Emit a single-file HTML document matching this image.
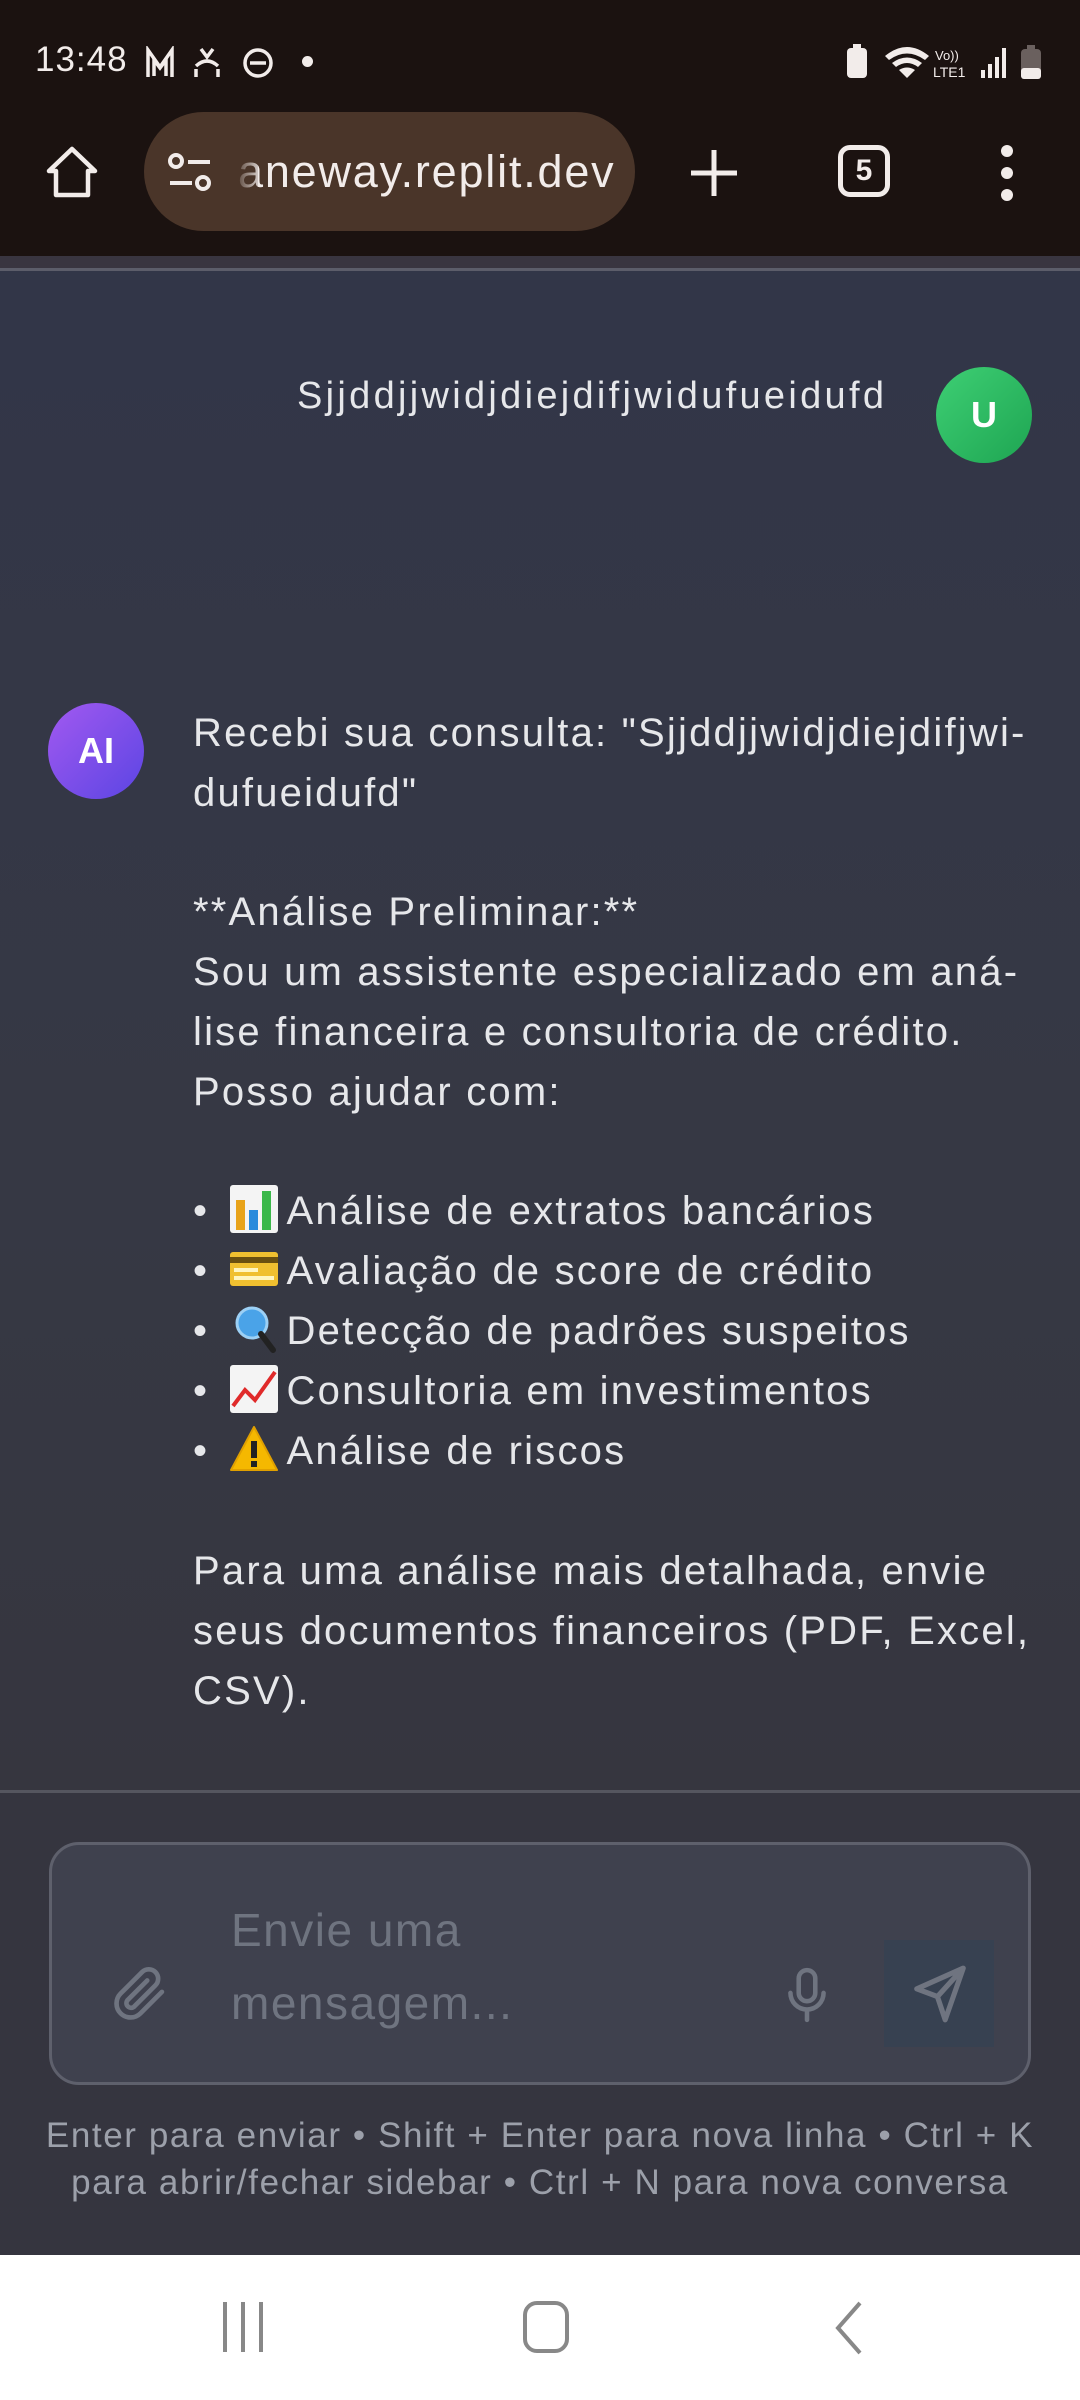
<!DOCTYPE html>
<html><head><meta charset="utf-8"><style>
*{margin:0;padding:0;box-sizing:border-box}
body{width:1080px;height:2400px;overflow:hidden;position:relative;background:#333646;font-family:"Liberation Sans","DejaVu Sans",sans-serif}
.a{position:absolute;white-space:nowrap}
#top{position:absolute;left:0;top:0;width:1080px;height:256px;background:#1b1210}
#strip{position:absolute;left:0;top:256px;width:1080px;height:12px;background:#393540}
#line1{position:absolute;left:0;top:268px;width:1080px;height:3px;background:#5c5d6a}
#chat{position:absolute;left:0;top:271px;width:1080px;height:1519px;background:linear-gradient(#323648,#363844 60%,#36363f)}
.t{color:#e6e7ea;font-size:40px;letter-spacing:2.2px;line-height:60px;left:193px}
.bot{position:absolute;left:0;top:1790px;width:1080px;height:465px;background:#35353f;border-top:3px solid #55565f}
.em{display:inline-block;width:50px;height:50px;vertical-align:-10px;margin:0 8px 0 6px}
</style></head><body>
<div id="top"></div><div id="strip"></div><div id="line1"></div><div id="chat"></div>

<!-- status bar -->
<div class="a" style="left:35px;top:40px;color:#f2ecea;font-size:35px;letter-spacing:1px">13:48</div>
<svg class="a" style="left:146px;top:46px" width="140" height="34" viewBox="0 0 140 34" fill="none" stroke="#f2ecea" stroke-width="3.5">
<path d="M2 31V4l12 17L26 4v27"/><path d="M8 30V14l6 8 6-8v16"/>
<path d="M55 3l6 8 6-8M50 20q11-10 22 0M50 31v-8M72 31v-8"/>
<circle cx="112" cy="17" r="13"/><path d="M104 17h16"/>
</svg>
<div class="a" style="left:302px;top:56px;width:11px;height:11px;border-radius:50%;background:#f2ecea"></div>
<svg class="a" style="left:845px;top:44px" width="210" height="36" viewBox="0 0 210 36" fill="#f2ecea">
<rect x="2" y="4" width="20" height="30" rx="4"/><rect x="8" y="0" width="8" height="5"/>
<path d="M40 12q22-18 44 0l-4 4q-18-13-36 0z M47 19q15-11 30 0l-4 4q-11-8-22 0z M54 26q8-5 16 0l-8 8z"/>
<text x="90" y="16" font-size="13" font-family="Liberation Sans">Vo))</text>
<text x="88" y="33" font-size="14" font-family="Liberation Sans">LTE1</text>
<rect x="136" y="26" width="4" height="8"/><rect x="143" y="20" width="4" height="14"/><rect x="150" y="13" width="4" height="21"/><rect x="157" y="4" width="4" height="30"/>
<rect x="176" y="5" width="20" height="30" rx="4" fill="#6a605e"/><rect x="176" y="24" width="20" height="11" rx="3"/><rect x="182" y="1" width="8" height="5" fill="#6a605e"/>
</svg>

<!-- toolbar -->
<svg class="a" style="left:44px;top:144px" width="56" height="56" viewBox="0 0 56 56" fill="none" stroke="#f2ecea" stroke-width="4.5" stroke-linejoin="round"><path d="M5 27L28 5l23 22h-7v24H12V27z"/></svg>
<div class="a" style="left:144px;top:112px;width:491px;height:119px;border-radius:60px;background:#4a3529"></div>
<svg class="a" style="left:166px;top:152px" width="50" height="42" viewBox="0 0 50 42" fill="none" stroke="#f2ecea" stroke-width="4"><circle cx="10" cy="9" r="6"/><path d="M22 10h22M4 31h22"/><circle cx="37" cy="31" r="6"/></svg>
<div class="a" style="left:238px;top:144px;color:#f2ecea;font-size:45px;letter-spacing:1.8px;line-height:56px">aneway.replit.dev</div>
<div class="a" style="left:234px;top:140px;width:24px;height:64px;background:linear-gradient(90deg,#4a3529,rgba(74,53,41,0.2))"></div>
<svg class="a" style="left:689px;top:148px" width="50" height="50" viewBox="0 0 50 50" stroke="#f2ecea" stroke-width="5"><path d="M25 2v46M2 25h46"/></svg>
<div class="a" style="left:838px;top:145px;width:52px;height:52px;border:5px solid #f2ecea;border-radius:12px;color:#f2ecea;font-size:30px;font-weight:bold;text-align:center;line-height:42px">5</div>
<svg class="a" style="left:995px;top:145px" width="24" height="56" viewBox="0 0 24 56" fill="#f2ecea"><circle cx="12" cy="6" r="6"/><circle cx="12" cy="28" r="6"/><circle cx="12" cy="50" r="6"/></svg>

<!-- user msg -->
<div class="a" style="left:297px;top:372px;color:#e6e7ea;font-size:38px;letter-spacing:3.3px;line-height:48px">Sjjddjjwidjdiejdifjwidufueidufd</div>
<div class="a" style="left:936px;top:367px;width:96px;height:96px;border-radius:50%;background:linear-gradient(135deg,#3ecf74,#1ea552);color:#fff;font-size:36px;font-weight:bold;text-align:center;line-height:96px">U</div>

<!-- AI msg -->
<div class="a" style="left:48px;top:703px;width:96px;height:96px;border-radius:50%;background:linear-gradient(135deg,#a259f0,#5b45e3);color:#fff;font-size:36px;font-weight:bold;text-align:center;line-height:96px">AI</div>
<div class="a t" style="top:703px">Recebi sua consulta: "Sjjddjjwidjdiejdifjwi-</div>
<div class="a t" style="top:763px">dufueidufd"</div>
<div class="a t" style="top:882px">**Análise Preliminar:**</div>
<div class="a t" style="top:942px">Sou um assistente especializado em aná-</div>
<div class="a t" style="top:1002px">lise financeira e consultoria de crédito.</div>
<div class="a t" style="top:1062px">Posso ajudar com:</div>
<div class="a t" style="top:1181px">• <svg class="em" viewBox="0 0 50 50"><rect x="1" y="1" width="48" height="48" rx="3" fill="#f4f4f4"/><rect x="7" y="16" width="9" height="30" fill="#e8a31a"/><rect x="20" y="26" width="9" height="20" fill="#2a8bdc"/><rect x="33" y="7" width="9" height="39" fill="#3bb84a"/></svg>Análise de extratos bancários</div>
<div class="a t" style="top:1241px">• <svg class="em" viewBox="0 0 50 50"><rect x="1" y="8" width="48" height="34" rx="3" fill="#f0c030"/><rect x="1" y="13" width="48" height="6" fill="#6a5010"/><rect x="5" y="24" width="24" height="4" fill="#fff6c0"/><rect x="5" y="32" width="40" height="4" fill="#fff6c0"/></svg>Avaliação de score de crédito</div>
<div class="a t" style="top:1301px">• <svg class="em" viewBox="0 0 50 50"><circle cx="23" cy="19" r="15" fill="#4aa3e8" stroke="#9cd0f5" stroke-width="3"/><path d="M32 30l12 16" stroke="#222" stroke-width="6" stroke-linecap="round"/></svg>Detecção de padrões suspeitos</div>
<div class="a t" style="top:1361px">• <svg class="em" viewBox="0 0 50 50"><rect x="1" y="1" width="48" height="48" rx="3" fill="#f4f4f4"/><path d="M4 42l12-16 10 10L46 8" fill="none" stroke="#e02a2a" stroke-width="4"/></svg>Consultoria em investimentos</div>
<div class="a t" style="top:1421px">• <svg class="em" viewBox="0 0 50 50"><path d="M25 3L48 46H2z" fill="#f5b800" stroke="#e0a000" stroke-width="2" stroke-linejoin="round"/><rect x="22" y="17" width="6" height="17" fill="#222"/><rect x="22" y="37" width="6" height="6" fill="#222"/></svg>Análise de riscos</div>
<div class="a t" style="top:1541px">Para uma análise mais detalhada, envie</div>
<div class="a t" style="top:1601px">seus documentos financeiros (PDF, Excel,</div>
<div class="a t" style="top:1661px">CSV).</div>

<!-- bottom input -->
<div class="bot"></div>
<div class="a" style="left:49px;top:1842px;width:982px;height:243px;border-radius:30px;background:#3f414e;border:3px solid #5e606c"></div>
<div class="a" style="left:231px;top:1894px;color:#6f7480;font-size:46px;letter-spacing:1.5px;line-height:73px">Envie uma<br>mensagem...</div>
<svg class="a" style="left:112px;top:1966px" width="56" height="56" viewBox="0 0 24 24" fill="none" stroke="#6f7480" stroke-width="2" stroke-linecap="round"><path d="M21.4 11.1l-9.2 9.2a6 6 0 01-8.5-8.5l9.2-9.2a4 4 0 015.7 5.7l-9.2 9.2a2 2 0 01-2.8-2.8l8.5-8.5"/></svg>
<svg class="a" style="left:782px;top:1966px" width="50" height="58" viewBox="0 0 24 28" fill="none" stroke="#6f7480" stroke-width="2.2" stroke-linecap="round"><rect x="8" y="2" width="8" height="15" rx="4"/><path d="M4 13a8 8 0 0016 0M12 21v5"/></svg>
<div class="a" style="left:884px;top:1940px;width:110px;height:107px;background:#374151"></div>
<svg class="a" style="left:909px;top:1962px" width="62" height="64" viewBox="0 0 24 24" fill="none" stroke="#6f7480" stroke-width="2" stroke-linejoin="round"><path d="M21 2L3 10l8 3 3 9z M11 13l10-11"/></svg>
<div class="a" style="left:0;width:1080px;top:2112px;text-align:center;color:#9ca0aa;font-size:35px;letter-spacing:1.6px;line-height:47px">Enter para enviar • Shift + Enter para nova linha • Ctrl + K<br>para abrir/fechar sidebar • Ctrl + N para nova conversa</div>

<!-- nav -->
<div class="a" style="left:0;top:2255px;width:1080px;height:145px;background:#fff"></div>
<svg class="a" style="left:220px;top:2300px" width="50" height="54" viewBox="0 0 50 54" stroke="#888" stroke-width="4"><path d="M5 2v50M23 2v50M41 2v50"/></svg>
<div class="a" style="left:523px;top:2301px;width:46px;height:52px;border:4px solid #888;border-radius:14px"></div>
<svg class="a" style="left:832px;top:2300px" width="32" height="56" viewBox="0 0 32 56" fill="none" stroke="#888" stroke-width="4"><path d="M28 3L6 28l22 25"/></svg>
</body></html>
